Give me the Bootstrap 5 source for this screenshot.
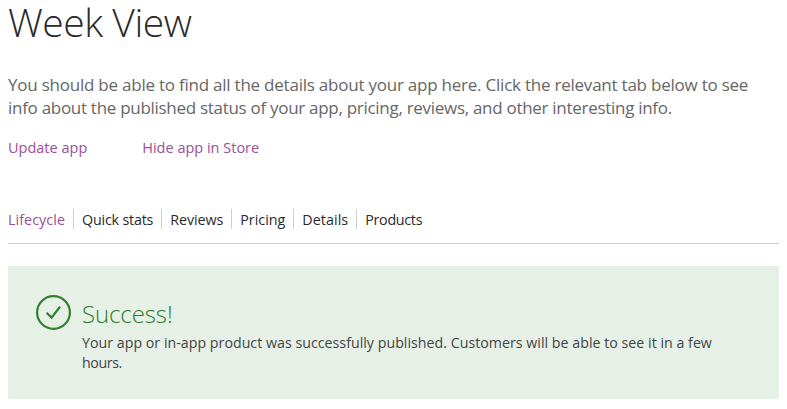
<!DOCTYPE html>
<html lang="en">
<head>
<meta charset="utf-8">
<meta name="viewport" content="width=device-width, initial-scale=1">
<title>Week View</title>
<link href="https://cdn.jsdelivr.net/npm/bootstrap@5.3.0/dist/css/bootstrap.min.css" rel="stylesheet">
<style>
body{font-family:"Open Sans","Noto Sans",sans-serif;color:#333;background:#fff}
.page{padding:0 8px}
.app-title{font-size:39px;line-height:43px;font-weight:300;color:#2a2a2a;letter-spacing:-.46px}
.intro{font-size:17px;line-height:23px;color:#666;margin-top:30px;letter-spacing:-.23px}
.intro .tight{letter-spacing:-.29px}
.actions{font-size:14.5px;line-height:20px;gap:55px;margin-top:19px}
.actions a,.tabs .active{color:#9b4f96}
.tabs{font-size:14.3px;line-height:22px;margin-top:51px;padding-bottom:14px;border-bottom:1px solid #ccc}
.tabs a{height:20px;color:#2a2a2a;padding:0 8px;border-left:1px solid #ccc}
.tabs li:first-child a{padding-left:0;border:0;letter-spacing:.07px}
.tabs li:nth-child(2){letter-spacing:-.2px}
.tabs li:nth-child(3){letter-spacing:-.07px}
.tabs li:nth-child(5){letter-spacing:.07px}
.tabs li:nth-child(6){letter-spacing:-.3px}
.notice{background:#e6f0e7;height:133px;margin-top:22px;padding:29px 28px;gap:11px}
.notice h2{font-size:24px;line-height:38px;font-weight:300;color:#2d7d2a;letter-spacing:-.1px}
.notice p{font-size:14.2px;line-height:20px;color:#444;letter-spacing:.025px}
.notice .tight{letter-spacing:-.4px}
</style>
</head>
<body>
<main class="page">
<h1 class="app-title mb-0">Week View</h1>
<p class="intro mb-0 text-nowrap">You should be able to find all the details about your app here. Click the relevant tab below to see<br><span class="tight">info about the published status of your app, pricing, reviews, and other interesting info.</span></p>
<div class="actions d-flex">
<a class="text-decoration-none" href="#">Update app</a>
<a class="text-decoration-none" href="#">Hide app in Store</a>
</div>
<ul class="tabs list-unstyled d-flex mb-0">
<li><a class="active d-block text-decoration-none" href="#">Lifecycle</a></li>
<li><a class="d-block text-decoration-none" href="#">Quick stats</a></li>
<li><a class="d-block text-decoration-none" href="#">Reviews</a></li>
<li><a class="d-block text-decoration-none" href="#">Pricing</a></li>
<li><a class="d-block text-decoration-none" href="#">Details</a></li>
<li><a class="d-block text-decoration-none" href="#">Products</a></li>
</ul>
<section class="notice d-flex">
<svg width="35" height="35" class="flex-shrink-0" viewBox="0 0 35 35" fill="none" stroke="#2f812c"><circle cx="17.5" cy="17.5" r="16.4" stroke-width="2.2"/><path d="M10.6 17.8L15.6 22.6L24 11.8" stroke-width="2.2"/></svg>
<div>
<h2 class="mb-0">Success!</h2>
<p class="mb-0 text-nowrap">Your app or in-app product was successfully published. Customers will be able to see it in a few<br><span class="tight">hours.</span></p>
</div>
</section>
</main>
<script src="https://cdn.jsdelivr.net/npm/bootstrap@5.3.0/dist/js/bootstrap.bundle.min.js"></script>
</body>
</html>
